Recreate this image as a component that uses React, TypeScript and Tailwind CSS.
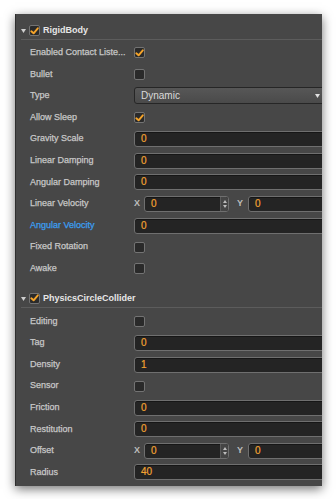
import React from "react";

const font = { fontFamily: '"Liberation Sans", Arial, sans-serif' };

function Check({ checked }: { checked?: boolean }) {
  return (
    <div className="w-[11px] h-[11px] rounded-[2px] border border-[#737373] bg-[#2a2a2a] flex items-center justify-center shrink-0">
      {checked && (
        <svg width="9" height="8" viewBox="0 0 9 8">
          <path d="M1.3 4.3 L3.6 6.3 L7.8 1.3" stroke="#f5a42a" strokeWidth="1.9" fill="none" strokeLinecap="round" strokeLinejoin="round" />
        </svg>
      )}
    </div>
  );
}

function Field({ value, stepper, className }: { value: string; stepper?: boolean; className?: string }) {
  return (
    <div className={"h-[16px] rounded-[3px] border border-[#6f6f6f] bg-[#242424] shadow-[inset_0_1px_0_#161616] flex items-center pl-[6px] relative " + (className ?? "")}>
      <span className="text-[10px] text-[#f2a232] leading-none [-webkit-text-stroke:0.2px_#f2a232]">{value}</span>
      {stepper && (
        <div className="absolute right-0 top-0 bottom-0 w-[8px] bg-[#454545] border-l border-[#5a5a5a] flex flex-col items-center justify-center gap-[2px] rounded-r-[2px]">
          <svg width="4" height="3" viewBox="0 0 4 3"><path d="M0 3 L2 0 L4 3 Z" fill="#bdbdbd" /></svg>
          <svg width="4" height="3" viewBox="0 0 4 3"><path d="M0 0 L2 3 L4 0 Z" fill="#bdbdbd" /></svg>
        </div>
      )}
    </div>
  );
}

function Row({ label, blue, children }: { label: string; blue?: boolean; children: React.ReactNode }) {
  return (
    <div className="h-[21.6px] flex items-center">
      <div className={"w-[118px] pl-[14px] text-[9px] whitespace-nowrap " + (blue ? "text-[#3b9ff2] [-webkit-text-stroke:0.25px_#3b9ff2]" : "text-[#c8c8c8] [-webkit-text-stroke:0.25px_#c8c8c8]")}>{label}</div>
      <div className="flex-1 flex items-center mr-[-4px]">{children}</div>
    </div>
  );
}

function Header({ title }: { title: string }) {
  return (
    <div className="h-[17px] ml-[5px] flex items-center border-b border-[#5c5c5c]">
      <svg width="5" height="4" viewBox="0 0 5 4" className="mr-[3px]"><path d="M0 0 L5 0 L2.5 4 Z" fill="#cfcfcf" /></svg>
      <div className="mb-[1px]"><Check checked /></div>
      <span className="ml-[3px] text-[9px] font-bold text-[#e6e6e6]">{title}</span>
    </div>
  );
}

function Vec() {
  return (
    <div className="flex items-center w-full">
      <span className="w-[10px] text-[9px] font-bold text-[#bdbdbd]">X</span>
      <Field value="0" stepper className="w-[85px]" />
      <span className="w-[19px] text-center pl-[3px] text-[9px] font-bold text-[#bdbdbd]">Y</span>
      <Field value="0" className="flex-1" />
    </div>
  );
}

export default function App() {
  return (
    <div className="w-[336px] h-[499px] bg-white pl-[15px] pt-[14px]" style={font}>
      <div className="w-[307px] h-[472px] bg-[#474747] border-l border-[#2e2e2e] overflow-hidden shadow-[0_3px_10px_rgba(0,0,0,0.55)] pt-[9px]">
        <Header title="RigidBody" />
        <div className="pt-[2px]">
          <Row label="Enabled Contact Liste..."><Check checked /></Row>
          <Row label="Bullet"><Check /></Row>
          <Row label="Type">
            <div className="h-[17px] w-full rounded-[3px] border border-[#262626] bg-[linear-gradient(#575757,#4a4a4a)] flex items-center pl-[6px] pr-[5px] justify-between">
              <span className="text-[10px] text-[#dadada]">Dynamic</span>
              <svg width="5" height="4" viewBox="0 0 5 4"><path d="M0 0 L5 0 L2.5 4 Z" fill="#e0e0e0" /></svg>
            </div>
          </Row>
          <Row label="Allow Sleep"><Check checked /></Row>
          <Row label="Gravity Scale"><Field value="0" className="w-full" /></Row>
          <Row label="Linear Damping"><Field value="0" className="w-full" /></Row>
          <Row label="Angular Damping"><Field value="0" className="w-full" /></Row>
          <Row label="Linear Velocity"><Vec /></Row>
          <Row label="Angular Velocity" blue><Field value="0" className="w-full" /></Row>
          <Row label="Fixed Rotation"><Check /></Row>
          <Row label="Awake"><Check /></Row>
        </div>
        <div className="pt-[11px]">
          <Header title="PhysicsCircleCollider" />
        </div>
        <div className="pt-[3px]">
          <Row label="Editing"><Check /></Row>
          <Row label="Tag"><Field value="0" className="w-full" /></Row>
          <Row label="Density"><Field value="1" className="w-full" /></Row>
          <Row label="Sensor"><Check /></Row>
          <Row label="Friction"><Field value="0" className="w-full" /></Row>
          <Row label="Restitution"><Field value="0" className="w-full" /></Row>
          <Row label="Offset"><Vec /></Row>
          <Row label="Radius"><Field value="40" className="w-full" /></Row>
        </div>
      </div>
    </div>
  );
}
